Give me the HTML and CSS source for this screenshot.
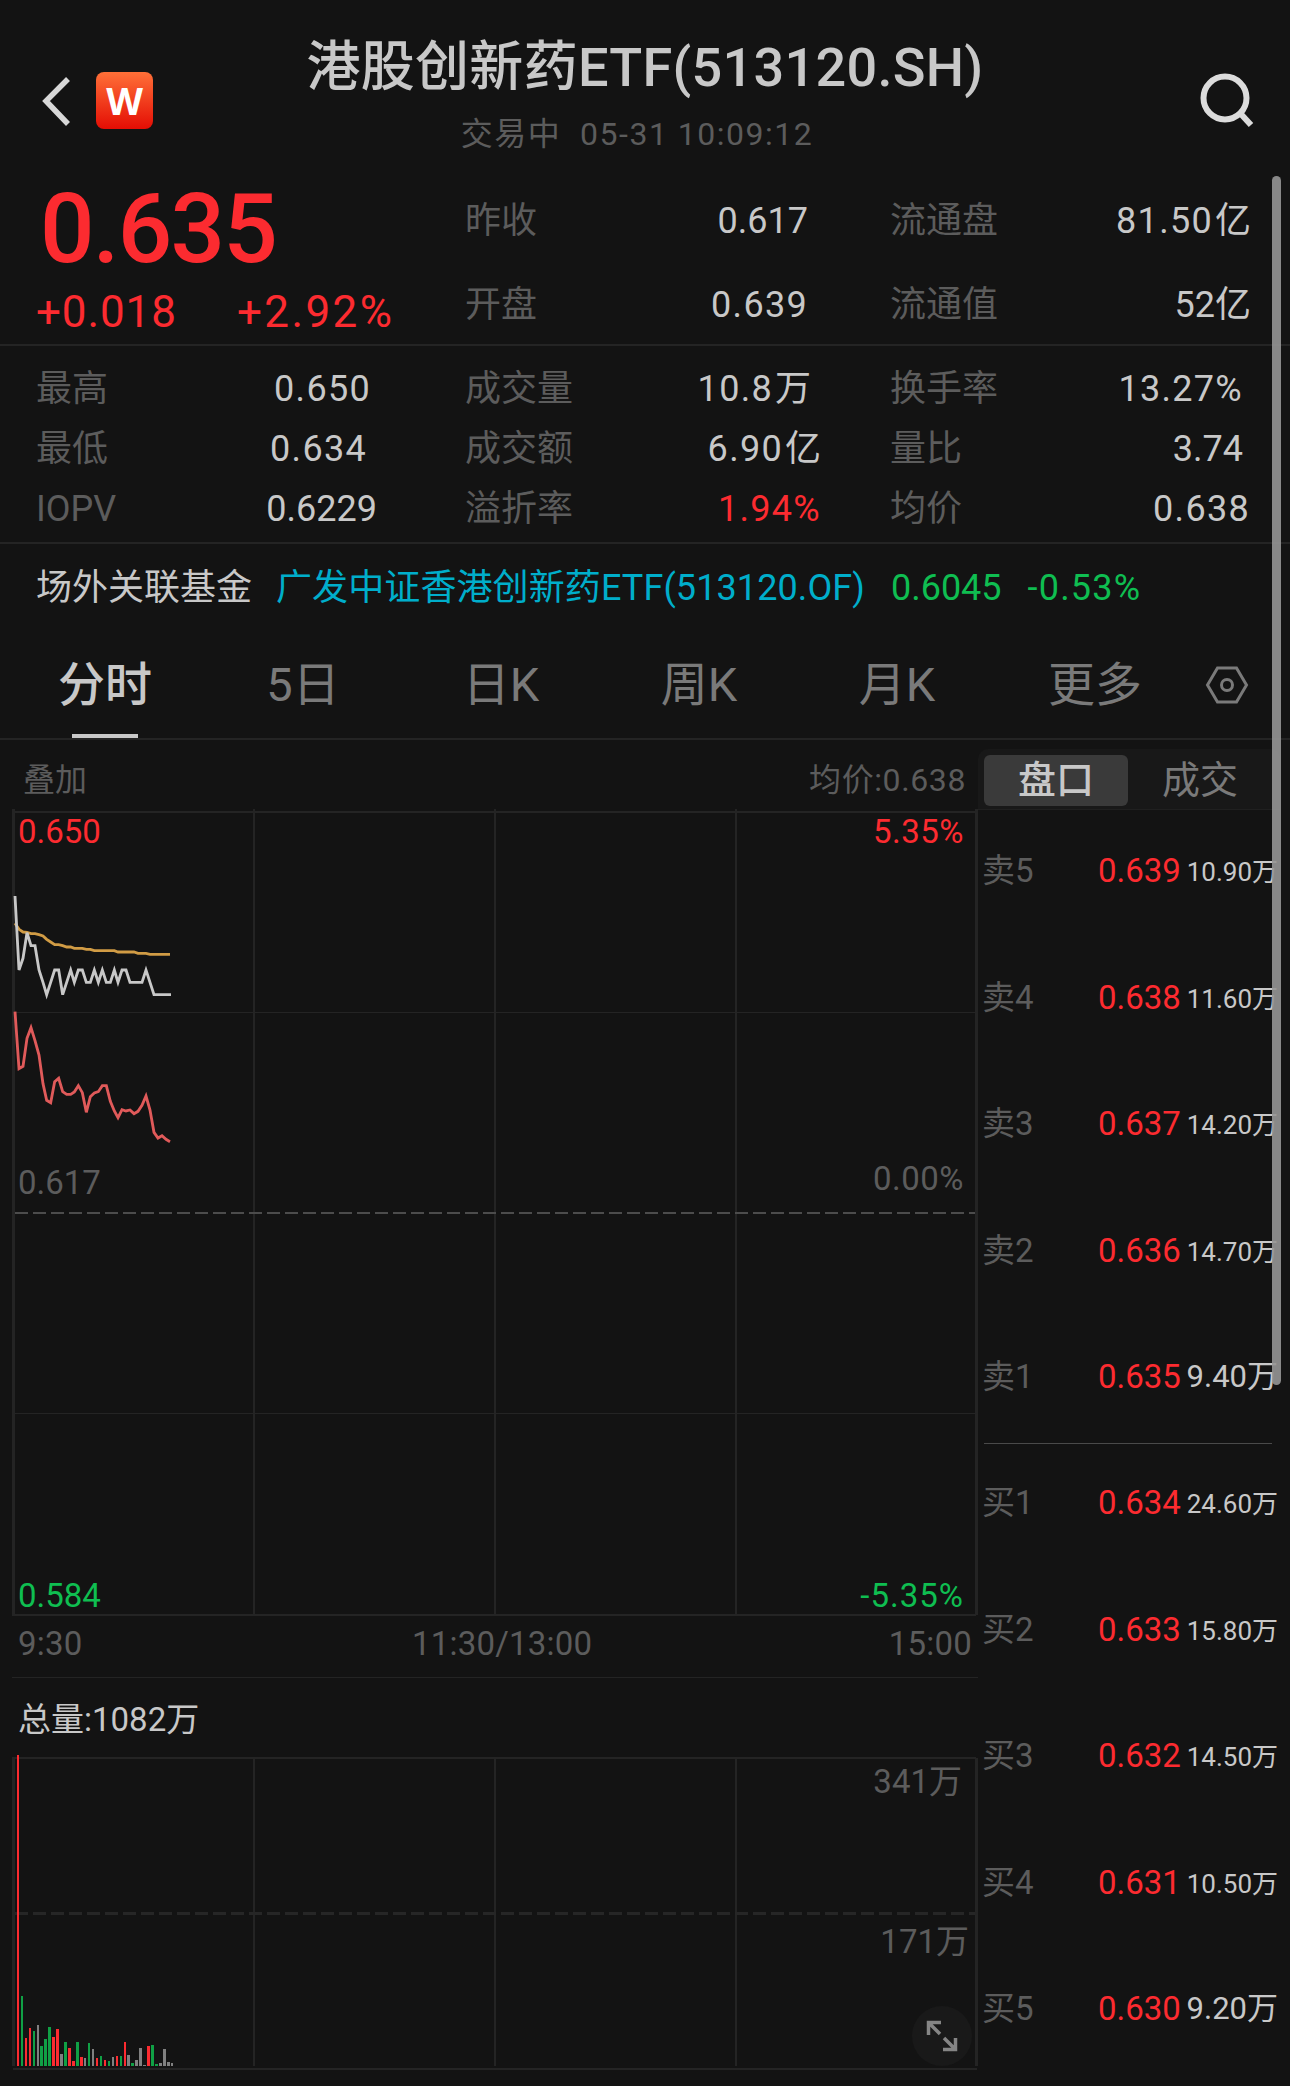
FILE: index.html
```html
<!DOCTYPE html>
<html lang="zh">

<head>
  <meta charset="UTF-8">
  <meta name="viewport" content="width=device-width, initial-scale=1.0">
  <title>港股创新药ETF</title>
  <link rel="stylesheet" href="styles.css">
</head>

<body>
  <div class="page">
    <header class="header">
      <div class="nav">
        <svg class="back" viewBox="0 0 32 52" width="32" height="52">
          <polyline points="28,4 6,26 28,49" />
        </svg>
        <div class="logo"><span>W</span></div>
      </div>
      <div class="title">
        <h1>港股创新药ETF(513120.SH)</h1>
        <p>交易中&nbsp; 05-31 10:09:12</p>
      </div>
      <svg class="search" viewBox="0 0 58 58" width="58" height="58">
        <circle cx="27" cy="26" r="21.5" />
        <path d="M42 41L53 53" />
      </svg>
    </header>

    <section class="quote">
      <div class="now red">
        <div class="price">0.635</div>
        <div class="change"><span>+0.018</span><span class="rate">+2.92%</span></div>
      </div>
      <div class="cells">
        <div class="cell b"><label>昨收</label><span class="in14 tight">0.617</span></div>
        <div class="cell c"><label>流通盘</label><span>81.50<i>亿</i></span></div>
        <div class="cell b"><label>开盘</label><span class="in14">0.639</span></div>
        <div class="cell c"><label>流通值</label><span class="tight">52亿</span></div>
      </div>
    </section>

    <section class="stats">
      <div class="cell a"><label>最高</label><span class="in7">0.650</span></div>
      <div class="cell b"><label>成交量</label><span class="in11">10.8<i>万</i></span></div>
      <div class="cell c"><label>换手率</label><span class="in9">13.27%</span></div>
      <div class="cell a"><label>最低</label><span class="in11">0.634</span></div>
      <div class="cell b"><label>成交额</label><span>6.90<i>亿</i></span></div>
      <div class="cell c"><label>量比</label><span class="in9 tight">3.74</span></div>
      <div class="cell a"><label>IOPV</label><span class="tight">0.6229</span></div>
      <div class="cell b"><label>溢折率</label><span class="red">1.94%</span></div>
      <div class="cell c"><label>均价</label><span class="in2">0.638</span></div>
    </section>

    <section class="related">
      <span>场外关联基金</span>
      <a>广发中证香港创新药ETF(513120.OF)</a>
      <span class="green">0.6045</span>
      <span class="green rate">-0.53%</span>
    </section>

    <nav class="tabs">
      <div class="tab active">分时</div>
      <div class="tab">5日</div>
      <div class="tab">日K</div>
      <div class="tab">周K</div>
      <div class="tab">月K</div>
      <div class="tab">更多</div>
      <svg class="setting" viewBox="0 0 44 40" width="44" height="40">
        <path d="M12.500 3H31.500L41.500 20L31.500 37H12.500L2.500 20Z" />
        <circle cx="22" cy="20" r="5.500" />
      </svg>
    </nav>

    <main class="main">
      <div class="charts">
        <div class="chart-head"><span>叠加</span><span class="avg">均价:0.638</span></div>

        <div class="stack price-chart">
          <svg viewBox="0 0 978 807" width="978" height="807">
            <g class="grid">
              <path class="bold" d="M13.500 0V806M976.500 0V806" />
              <path d="M12 3H976M12 806H976M254 0V805M495 0V805M736 0V805" />
              <path class="thin" d="M15 203.500H975M15 604.500H975" />
              <path class="zero" d="M15 404H975" />
            </g>
            <g class="lines" transform="translate(0 51) scale(.33333)">
              <polyline class="gold" points="45,190 57,208 69,216 81,217 93,221 105,221 117,224 129,228 140,238 152,246 164,254 176,254 188,257 200,261 212,261 223,265 247,265 259,268 271,268 283,272 343,272 354,276 402,276 414,280 438,280 450,283 510,283" />
              <polyline class="white" points="45,108 57,330 69,295 81,218 93,257 105,257 117,330 129,367 140,404 152,367 164,330 176,330 188,404 200,367 212,330 223,367 235,330 247,330 259,367 271,367 283,330 295,367 307,330 319,367 331,367 343,330 354,367 366,330 378,330 390,367 426,367 438,330 450,367 462,404 513,404" />
              <polyline class="pink" points="45,455 57,626 69,619 81,535 93,503 105,542 117,585 129,671 140,721 152,728 164,665 176,655 188,695 200,703 212,703 223,696 235,677 247,698 259,757 271,710 283,699 295,695 307,677 319,677 331,724 343,753 354,773 366,749 378,753 390,750 402,761 414,754 426,736 438,708 450,750 462,817 474,834 486,827 498,838 510,845" />
            </g>
          </svg>
          <div class="labels">
            <div class="row red"><span>0.650</span><span>5.35%</span></div>
            <div class="row mid"><span>0.617</span><span class="up">0.00%</span></div>
            <div class="row green"><span>0.584</span><span>-5.35%</span></div>
          </div>
        </div>

        <div class="times"><span>9:30</span><span class="noon">11:30/13:00</span><span>15:00</span></div>

        <div class="total">总量:1082万</div>

        <div class="stack volume-chart">
          <svg viewBox="0 0 978 316" width="978" height="316">
            <g class="grid">
              <path class="bold" d="M13.500 3V311M976.500 3V311" />
              <path d="M12 3H976M13 314H977M254 3V311M495 3V311M736 3V311" />
              <path class="half" d="M15 158.500H975" />
            </g>
            <g transform="translate(0 205) scale(.33333)">
              <path class="bar-red" d="M51 318V-615h6V318zM75 318V234h6V318zM87 318V204h6V318zM156 318V231h9V318zM168 318V207h9V318zM204 318V264h9V318zM216 318V303h9V318zM240 318V291h9V318zM288 318V294h6V318zM312 318V300h6V318zM348 318V288h6V318zM372 318V246h6V318zM441 318V258h9V318z" />
              <path class="bar-green" d="M63 318V108h6V318zM99 318V213h6V318zM120 318V258h9V318zM132 318V237h9V318zM144 318V201h9V318zM192 318V246h9V318zM228 318V246h9V318zM264 318V249h6V318zM300 318V288h6V318zM324 318V303h6V318zM360 318V288h6V318zM393 318V309h9V318zM453 318V255h9V318zM465 318V312h9V318z" />
              <path class="bar-gray" d="M111 318V195h6V318zM180 318V282h9V318zM252 318V294h6V318zM276 318V267h6V318zM336 318V291h6V318zM381 318V285h9V318zM405 318V300h9V318zM417 318V264h9V318zM429 318V315h9V318zM477 318V309h9V318zM489 318V267h9V318zM501 318V306h9V318zM513 318V309h6V318z" />
            </g>
          </svg>
          <div class="labels">
            <span class="max">341万</span>
            <span class="half-value">171万</span>
            <svg class="expand" viewBox="0 0 60 60" width="60" height="60">
              <circle cx="30" cy="30" r="30" />
              <path d="M29 16.500H16.500V29M16.500 16.500L28 28M43.500 32V43.500H31M43.500 43.500L32 32" />
            </svg>
          </div>
        </div>
      </div>

      <aside class="book">
        <div class="switch">
          <div class="on">盘口</div>
          <div>成交</div>
        </div>
        <ul class="sell">
          <li><label>卖5</label><b>0.639</b><span>10.90万</span></li>
          <li><label>卖4</label><b>0.638</b><span>11.60万</span></li>
          <li><label>卖3</label><b>0.637</b><span>14.20万</span></li>
          <li><label>卖2</label><b>0.636</b><span>14.70万</span></li>
          <li><label>卖1</label><b>0.635</b><span class="big">9.40万</span></li>
        </ul>
        <ul class="buy">
          <li><label>买1</label><b>0.634</b><span>24.60万</span></li>
          <li><label>买2</label><b>0.633</b><span>15.80万</span></li>
          <li><label>买3</label><b>0.632</b><span>14.50万</span></li>
          <li><label>买4</label><b>0.631</b><span>10.50万</span></li>
          <li><label>买5</label><b>0.630</b><span class="big">9.20万</span></li>
        </ul>
      </aside>
    </main>

    <div class="scrollbar"></div>
  </div>
</body>

</html>
```
FILE: styles.css
```css
*{
  box-sizing: border-box;
}
body{
  margin: 0;
  background: #131313;
  color: #c8c8c8;
  font-family: Roboto, "Noto Sans CJK SC", sans-serif;
  font-size: 36px;
}
h1,p,ul{
  margin: 0;
  padding: 0;
}
ul{
  list-style: none;
}
i,b{
  font-style: normal;
  font-weight: 400;
}
svg{
  display: block;
  fill: none;
}
.page{
  position: relative;
  width: 1290px;
  height: 2086px;
  overflow: hidden;
}
.red{
  color: #fc2b30;
}
.green{
  color: #0fbe51;
}

/* header */
.header{
  display: grid;
  grid-template-columns: 1fr auto 1fr;
  height: 174px;
  padding: 0 40px;
}
.nav{
  display: flex;
  padding-top: 72px;
}
.back{
  margin: 3px 24px 0 0;
  stroke: #d8d8d8;
  stroke-width: 5.5;
}
.logo{
  width: 57px;
  height: 57px;
  border-radius: 8px;
  background: linear-gradient(#ff7038, #e40d04);
  color: #fff;
  font: 700 38px/57px "Noto Sans", sans-serif;
  text-align: center;
}
.title{
  padding-top: 30px;
  text-align: center;
}
.title h1{
  font-size: 54px;
  line-height: 76px;
  font-weight: 500;
  letter-spacing: .3px;
}
.title p{
  margin-top: 6px;
  padding-right: 16px;
  font-size: 32px;
  line-height: 44px;
  letter-spacing: 1.5px;
  color: #5c5c5c;
}
.search{
  justify-self: end;
  margin: 72px -6px 0 0;
  stroke: #dcdcdc;
  stroke-width: 6;
}

/* quote */
.quote{
  display: flex;
  height: 172px;
  border-bottom: 2px solid #242424;
}
.now{
  width: 465px;
}
.price{
  height: 106px;
  padding: 7px 0 0 40px;
  font-size: 96px;
  line-height: 96px;
  font-weight: 500;
  letter-spacing: -1.8px;
}
.change{
  display: flex;
  gap: 60px;
  padding-left: 36px;
  font-size: 44px;
  line-height: 64px;
  letter-spacing: .9px;
}
.change .rate{
  letter-spacing: 2.4px;
}
.cells{
  display: grid;
  grid-template-columns: 425px 400px;
  grid-auto-rows: 84px;
  padding-top: 5px;
}
.cell{
  display: flex;
  justify-content: space-between;
  align-items: center;
  line-height: 52px;
}
.cell.a{
  padding-right: 88px;
}
.cell.b{
  padding-right: 69px;
}
.cell.c{
  padding-right: 39px;
}
.cell label{
  color: #5c5c5c;
}
.cell span{
  letter-spacing: 1.3px;
}
.cell i{
  margin-left: 2px;
  letter-spacing: 0;
}
.cell .tight{
  letter-spacing: 0;
}
.in14{
  margin-right: 13px;
}
.in11{
  margin-right: 10px;
}
.in9{
  margin-right: 8px;
}
.in7{
  margin-right: 6px;
}
.in2{
  margin-right: 1px;
}
.stats{
  display: grid;
  grid-template-columns: 429px 425px 400px;
  grid-auto-rows: 60px;
  height: 198px;
  padding: 13px 0 0 36px;
  border-bottom: 2px solid #242424;
}

/* related fund */
.related{
  display: flex;
  height: 82px;
  padding: 18px 0 0 36px;
  line-height: 52px;
}
.related a{
  margin: 0 26px 0 24px;
  color: #00aecb;
  letter-spacing: .1px;
}
.related .rate{
  margin-left: 26px;
  letter-spacing: 1.2px;
}

/* tabs */
.tabs{
  display: flex;
  align-items: center;
  height: 114px;
  padding: 6px 0 0 6px;
  border-bottom: 2px solid #242424;
}
.tab{
  position: relative;
  width: 198px;
  text-align: center;
  font-size: 47px;
  line-height: 108px;
  color: #7a7a7a;
}
.tab.active{
  color: #c8c8c8;
  font-weight: 500;
}
.tab.active::after{
  content: "";
  position: absolute;
  left: 66px;
  bottom: 1px;
  width: 66px;
  height: 4px;
  background: #c8c8c8;
}
.setting{
  margin-left: 11px;
  stroke: #7a7a7a;
  stroke-width: 3;
}

/* charts */
.main{
  display: flex;
}
.charts{
  width: 978px;
}
.chart-head{
  display: flex;
  justify-content: space-between;
  height: 69px;
  padding: 0 12px 0 23px;
  font-size: 32px;
  line-height: 80px;
  color: #5c5c5c;
}
.avg{
  letter-spacing: .6px;
}
.stack{
  display: grid;
}
.stack > *{
  grid-area: 1 / 1;
}
.grid path{
  stroke: #242424;
  stroke-width: 2;
}
.grid .bold{
  stroke-width: 3;
}
.grid .thin{
  stroke-width: 1;
}
.grid .zero{
  stroke: #4c4c4c;
  stroke-dasharray: 13 5;
}
.grid .half{
  stroke: #262626;
  stroke-width: 3;
  stroke-dasharray: 13 5;
}
.lines polyline{
  stroke-width: 8.5;
}
.gold{
  stroke: #d19c45;
}
.white{
  stroke: #c8c8c8;
}
.pink{
  stroke: #e05a5a;
}
.bar-red{
  fill: #fc2b30;
}
.bar-green{
  fill: #10a045;
}
.bar-gray{
  fill: #808080;
}
.labels{
  display: flex;
  flex-direction: column;
  padding-top: 3px;
  font-size: 33px;
  line-height: 40px;
}
.row{
  display: flex;
  justify-content: space-between;
  padding: 0 14px 0 18px;
}
.row span + span{
  letter-spacing: .5px;
}
.row.mid{
  margin-top: 311px;
  color: #5c5c5c;
}
.row.mid .up{
  height: 40px;
  margin-top: -4px;
}
.row.green{
  margin-top: 373px;
}
.row.green span + span{
  letter-spacing: 1px;
}
.times{
  display: flex;
  justify-content: space-between;
  height: 62px;
  margin-left: 12px;
  padding: 5px 6px 0 6px;
  border-bottom: 1px solid #242424;
  font-size: 33px;
  line-height: 46px;
  letter-spacing: .2px;
  color: #5c5c5c;
}
.noon{
  margin-left: 33px;
}
.total{
  height: 77px;
  padding: 4px 0 0 18px;
  font-size: 33px;
  line-height: 76px;
}
.volume-chart .labels{
  align-items: flex-end;
  color: #5c5c5c;
}
.max{
  margin: 4px 16px 0 0;
}
.half-value{
  margin: 120px 9px 0 0;
}
.expand{
  margin: 44px 6px 0 0;
}
.expand circle{
  fill: #191919;
}
.expand path{
  stroke: #858585;
  stroke-width: 3.5;
}

/* order book */
.book{
  width: 302px;
}
.switch{
  display: flex;
  height: 61px;
  margin-top: 9px;
  padding: 6px;
  border-bottom: 1px solid #202020;
  border-radius: 10px 10px 0 0;
  background: #181818;
  color: #7a7a7a;
}
.switch div{
  width: 144px;
  height: 51px;
  border-radius: 6px;
  text-align: center;
  line-height: 51px;
  font-size: 38px;
}
.switch .on{
  background: #3a3a3a;
  color: #c8c8c8;
  font-weight: 500;
}
.book li{
  display: flex;
  align-items: center;
  width: 302px;
  height: 126.5px;
  padding: 0 2px 4px 4px;
  font-size: 33px;
  line-height: 48px;
}
.book label{
  width: 116px;
  color: #5c5c5c;
}
.book b{
  color: #fc2b30;
}
.book li span{
  margin-left: auto;
  padding-top: 2px;
  font-size: 26px;
}
.book li .big{
  padding-top: 0;
  font-size: 31px;
}
.sell{
  height: 633px;
}
.buy{
  width: 288px;
  margin-left: 6px;
  border-top: 1px solid #4a4a4a;
}
.buy li{
  margin-left: -6px;
  padding-bottom: 8px;
}

.scrollbar{
  position: absolute;
  top: 176px;
  left: 1272px;
  width: 9px;
  height: 1209px;
  border-radius: 5px;
  background: rgba(150, 150, 150, .9);
}
```
